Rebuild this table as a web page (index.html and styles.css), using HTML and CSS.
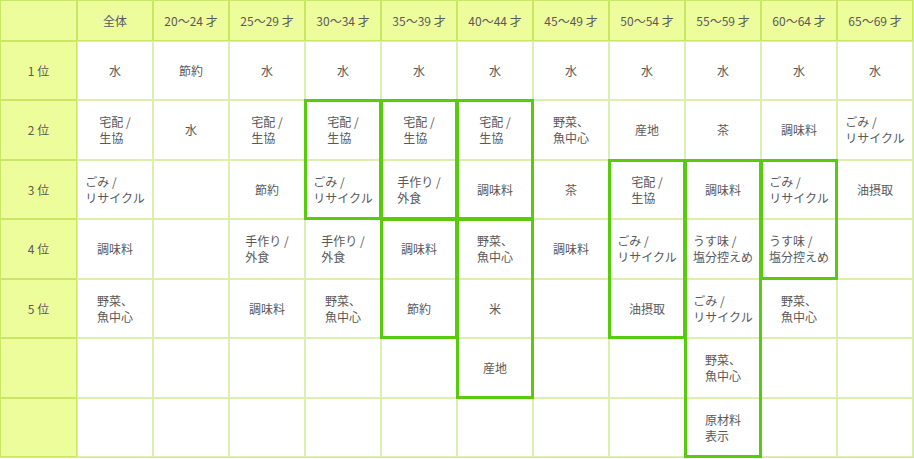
FILE: index.html
```html
<!DOCTYPE html>
<html lang="ja">
<head>
<meta charset="utf-8">
<title>年代別ランキング</title>
<link rel="stylesheet" href="styles.css">
</head>
<body>
<div class="board">
  <div class="table">
    <div class="cell head corner"></div>
    <div class="cell head">全体</div>
    <div class="cell head">20〜24 才</div>
    <div class="cell head">25〜29 才</div>
    <div class="cell head">30〜34 才</div>
    <div class="cell head">35〜39 才</div>
    <div class="cell head">40〜44 才</div>
    <div class="cell head">45〜49 才</div>
    <div class="cell head">50〜54 才</div>
    <div class="cell head">55〜59 才</div>
    <div class="cell head">60〜64 才</div>
    <div class="cell head">65〜69 才</div>

    <div class="cell rank">1 位</div>
    <div class="cell"><span>水</span></div>
    <div class="cell"><span>節約</span></div>
    <div class="cell"><span>水</span></div>
    <div class="cell"><span>水</span></div>
    <div class="cell"><span>水</span></div>
    <div class="cell"><span>水</span></div>
    <div class="cell"><span>水</span></div>
    <div class="cell"><span>水</span></div>
    <div class="cell"><span>水</span></div>
    <div class="cell"><span>水</span></div>
    <div class="cell"><span>水</span></div>

    <div class="cell rank">2 位</div>
    <div class="cell"><span>宅配 /<br>生協</span></div>
    <div class="cell"><span>水</span></div>
    <div class="cell"><span>宅配 /<br>生協</span></div>
    <div class="cell"><span>宅配 /<br>生協</span></div>
    <div class="cell"><span>宅配 /<br>生協</span></div>
    <div class="cell"><span>宅配 /<br>生協</span></div>
    <div class="cell"><span>野菜、<br>魚中心</span></div>
    <div class="cell"><span>産地</span></div>
    <div class="cell"><span>茶</span></div>
    <div class="cell"><span>調味料</span></div>
    <div class="cell"><span>ごみ /<br>リサイクル</span></div>

    <div class="cell rank">3 位</div>
    <div class="cell"><span>ごみ /<br>リサイクル</span></div>
    <div class="cell"></div>
    <div class="cell"><span>節約</span></div>
    <div class="cell"><span>ごみ /<br>リサイクル</span></div>
    <div class="cell"><span>手作り /<br>外食</span></div>
    <div class="cell"><span>調味料</span></div>
    <div class="cell"><span>茶</span></div>
    <div class="cell"><span>宅配 /<br>生協</span></div>
    <div class="cell"><span>調味料</span></div>
    <div class="cell"><span>ごみ /<br>リサイクル</span></div>
    <div class="cell"><span>油摂取</span></div>

    <div class="cell rank">4 位</div>
    <div class="cell"><span>調味料</span></div>
    <div class="cell"></div>
    <div class="cell"><span>手作り /<br>外食</span></div>
    <div class="cell"><span>手作り /<br>外食</span></div>
    <div class="cell"><span>調味料</span></div>
    <div class="cell"><span>野菜、<br>魚中心</span></div>
    <div class="cell"><span>調味料</span></div>
    <div class="cell"><span>ごみ /<br>リサイクル</span></div>
    <div class="cell"><span>うす味 /<br>塩分控えめ</span></div>
    <div class="cell"><span>うす味 /<br>塩分控えめ</span></div>
    <div class="cell"></div>

    <div class="cell rank">5 位</div>
    <div class="cell"><span>野菜、<br>魚中心</span></div>
    <div class="cell"></div>
    <div class="cell"><span>調味料</span></div>
    <div class="cell"><span>野菜、<br>魚中心</span></div>
    <div class="cell"><span>節約</span></div>
    <div class="cell"><span>米</span></div>
    <div class="cell"></div>
    <div class="cell"><span>油摂取</span></div>
    <div class="cell"><span>ごみ /<br>リサイクル</span></div>
    <div class="cell"><span>野菜、<br>魚中心</span></div>
    <div class="cell"></div>

    <div class="cell rank"></div>
    <div class="cell"></div>
    <div class="cell"></div>
    <div class="cell"></div>
    <div class="cell"></div>
    <div class="cell"></div>
    <div class="cell"><span>産地</span></div>
    <div class="cell"></div>
    <div class="cell"></div>
    <div class="cell"><span>野菜、<br>魚中心</span></div>
    <div class="cell"></div>
    <div class="cell"></div>

    <div class="cell rank"></div>
    <div class="cell"></div>
    <div class="cell"></div>
    <div class="cell"></div>
    <div class="cell"></div>
    <div class="cell"></div>
    <div class="cell"></div>
    <div class="cell"></div>
    <div class="cell"></div>
    <div class="cell"><span>原材料<br>表示</span></div>
    <div class="cell"></div>
    <div class="cell"></div>
  </div>

  <div class="marks" aria-hidden="true">
    <div class="mark c5 r3-5"></div>
    <div class="mark c6 r3-5"></div>
    <div class="mark c6 r5-7"></div>
    <div class="mark c7 r3-5"></div>
    <div class="mark c7 r5-8"></div>
    <div class="mark c9 r4-7"></div>
    <div class="mark c10 r4-9"></div>
    <div class="mark c11 r4-6"></div>
  </div>
</div>
</body>
</html>
```

FILE: styles.css
```css
html, body {
  margin: 0;
  padding: 0;
  background: #ffffff;
}

body {
  font-family: "Noto Sans CJK JP", "Noto Sans", sans-serif;
  font-size: 12px;
  color: #595959;
}

.board {
  display: grid;
  width: 914px;
}

.table,
.marks {
  grid-area: 1 / 1;
  display: grid;
  grid-template-columns: 77px repeat(11, 76px);
  grid-template-rows: 41px 59px 60px 59px 60px 59px 60px 59px;
}

.table {
  border-right: 1px solid #d6eba0;
  border-bottom: 1px solid #d6eba0;
  width: 913px;
}

.marks {
  pointer-events: none;
  z-index: 2;
}

.cell {
  box-sizing: border-box;
  border: 1px solid #dcefae;
  display: flex;
  align-items: center;
  justify-content: center;
  line-height: 16px;
  text-align: center;
}

.cell span {
  display: inline-block;
  text-align: left;
}

.head,
.rank {
  background: #eefd9c;
  border-color: #c9e765;
}

.mark {
  box-sizing: border-box;
  border: 3px solid #58cc0c;
  margin: -1px;
}

.c5 { grid-column: 5; }
.c6 { grid-column: 6; }
.c7 { grid-column: 7; }
.c9 { grid-column: 9; }
.c10 { grid-column: 10; }
.c11 { grid-column: 11; }

.r3-5 { grid-row: 3 / 5; }
.r5-7 { grid-row: 5 / 7; }
.r5-8 { grid-row: 5 / 8; }
.r4-7 { grid-row: 4 / 7; }
.r4-9 { grid-row: 4 / 9; }
.r4-6 { grid-row: 4 / 6; }
```
